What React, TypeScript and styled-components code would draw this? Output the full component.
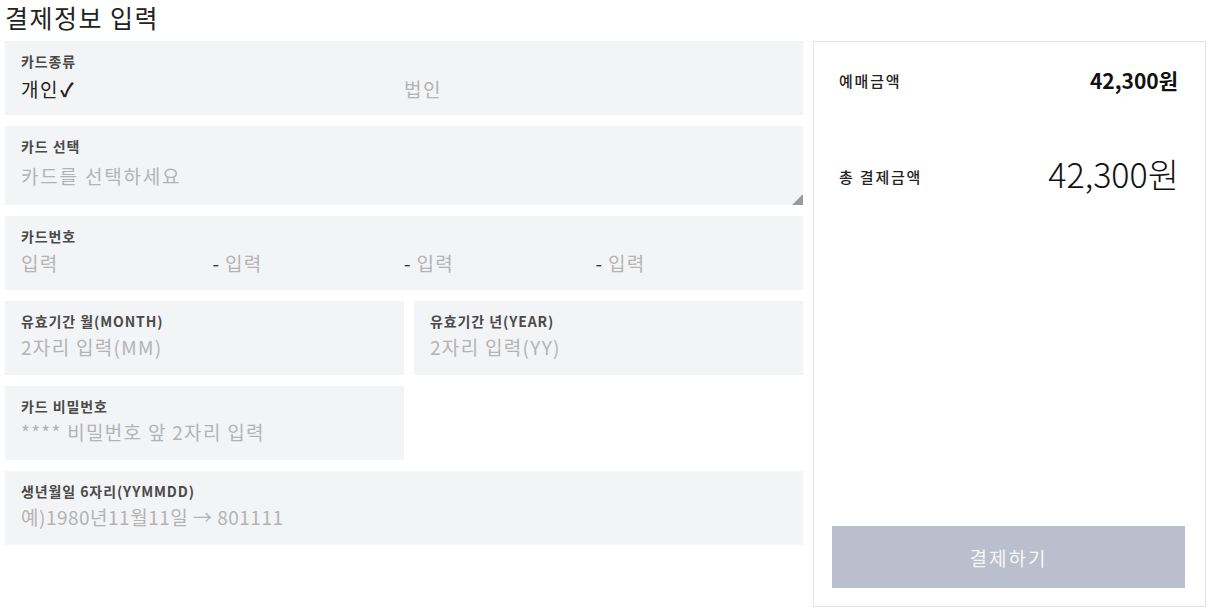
import React from "react";
import styled, { createGlobalStyle } from "styled-components";

const GlobalStyle = createGlobalStyle`
  html, body {
    margin: 0;
    padding: 0;
    background: #fff;
  }
  body {
    font-family: "Noto Sans CJK KR", "Noto Sans", sans-serif;
    color: #222;
  }
  * {
    box-sizing: border-box;
  }
`;

const Page = styled.div`
  width: 1211px;
  padding: 0 5px;
`;

const Title = styled.h1`
  margin: 0 0 7px;
  font-size: 25px;
  line-height: 34px;
  font-weight: 400;
  letter-spacing: 1.5px;
  color: #222;
`;

const Layout = styled.div`
  display: flex;
  align-items: flex-start;
  gap: 10px;
`;

const FormColumn = styled.div`
  width: 798px;
  display: flex;
  flex-direction: column;
  gap: 11px;
`;

const FieldRow = styled.div`
  display: grid;
  grid-template-columns: 399px 1fr;
  gap: 10px;
`;

const Field = styled.div<{ $height?: number; $width?: number; $resizable?: boolean }>`
  position: relative;
  height: ${(p) => p.$height || 74}px;
  width: ${(p) => (p.$width ? `${p.$width}px` : "100%")};
  padding: 10px 16px 12px;
  background-color: #f3f4f5;
  display: flex;
  flex-direction: column;
  gap: 4px;

  ${(p) =>
    p.$resizable &&
    `
    padding-bottom: 0;
    &::after {
      content: "";
      position: absolute;
      right: 0;
      bottom: 0;
      width: 0;
      height: 0;
      border-left: 11px solid transparent;
      border-bottom: 11px solid #9a9a9a;
    }
  `}
`;

const FieldLabel = styled.label`
  font-size: 14px;
  line-height: 20px;
  font-weight: 700;
  letter-spacing: 0.9px;
  color: #4a4a4a;
  white-space: nowrap;
`;

const Columns = styled.div<{ $count: number }>`
  display: grid;
  grid-template-columns: repeat(${(p) => p.$count}, 1fr);
  align-items: center;
  height: 28px;
`;

const TypeOption = styled.button<{ $active?: boolean }>`
  all: unset;
  font-family: inherit;
  font-size: 19px;
  line-height: 28px;
  letter-spacing: 1.5px;
  color: ${(p) => (p.$active ? "#222" : "#b3b3b3")};
  cursor: pointer;
  white-space: nowrap;
`;

const CheckMark = styled.span`
  margin-left: 1px;
  font-weight: 700;
  color: #222;
`;

const TextInput = styled.input<{ $spacing?: number }>`
  border: 0;
  outline: none;
  padding: 0;
  margin: -2px 0 0;
  width: 100%;
  min-width: 0;
  height: 28px;
  background: transparent;
  font-family: inherit;
  font-size: 19px;
  line-height: 28px;
  letter-spacing: ${(p) => p.$spacing ?? 1.3}px;
  color: #222;

  &::placeholder {
    color: #b3b3b3;
  }
`;

const TextArea = styled.textarea`
  flex: 1;
  border: 0;
  outline: none;
  resize: none;
  padding: 2px 0 0;
  margin: 0;
  background: transparent;
  font-family: inherit;
  font-size: 19px;
  line-height: 28px;
  letter-spacing: 1.8px;
  color: #222;

  &::placeholder {
    color: #b3b3b3;
  }
`;

const NumberPart = styled.div`
  display: flex;
  align-items: center;
  gap: 6px;
`;

const Dash = styled.span`
  font-size: 19px;
  line-height: 28px;
  margin-top: -2px;
  color: #333;
`;

const SummaryPanel = styled.aside`
  width: 393px;
  height: 566px;
  border: 1px solid #e3e3e3;
  padding: 19px 20px 18px 18px;
  display: flex;
  flex-direction: column;
`;

const SummaryRow = styled.div<{ $height: number; $gap?: number }>`
  display: flex;
  justify-content: space-between;
  align-items: center;
  height: ${(p) => p.$height}px;
  margin-top: ${(p) => p.$gap || 0}px;
  padding: 0 7px 0 7px;
`;

const SummaryLabel = styled.span`
  font-size: 15px;
  font-weight: 500;
  letter-spacing: 1.8px;
  color: #222;
`;

const SummaryValue = styled.span<{ $large?: boolean }>`
  font-size: ${(p) => (p.$large ? 34 : 21)}px;
  line-height: 1;
  font-weight: ${(p) => (p.$large ? 300 : 700)};
  color: #111;
  margin-top: ${(p) => (p.$large ? -4 : 0)}px;
  margin-right: ${(p) => (p.$large ? -1 : 0)}px;
`;

const PayButton = styled.button`
  all: unset;
  margin-top: auto;
  height: 62px;
  background-color: #b9bfcc;
  color: #f5f6f8;
  font-family: inherit;
  font-size: 19px;
  letter-spacing: 2px;
  text-align: center;
  cursor: pointer;
`;

export default function App() {
  return (
    <Page>
      <GlobalStyle />
      <Title>결제정보 입력</Title>
      <Layout>
        <FormColumn>
          <Field>
            <FieldLabel>카드종류</FieldLabel>
            <Columns $count={2}>
              <TypeOption $active>
                개인<CheckMark>✓</CheckMark>
              </TypeOption>
              <TypeOption>법인</TypeOption>
            </Columns>
          </Field>

          <Field $height={79} $resizable>
            <FieldLabel>카드 선택</FieldLabel>
            <TextArea placeholder="카드를 선택하세요" />
          </Field>

          <Field>
            <FieldLabel>카드번호</FieldLabel>
            <Columns $count={4}>
              <TextInput placeholder="입력" />
              {[1, 2, 3].map((i) => (
                <NumberPart key={i}>
                  <Dash>-</Dash>
                  <TextInput placeholder="입력" />
                </NumberPart>
              ))}
            </Columns>
          </Field>

          <FieldRow>
            <Field>
              <FieldLabel>유효기간 월(MONTH)</FieldLabel>
              <TextInput placeholder="2자리 입력(MM)" />
            </Field>
            <Field>
              <FieldLabel>유효기간 년(YEAR)</FieldLabel>
              <TextInput placeholder="2자리 입력(YY)" />
            </Field>
          </FieldRow>

          <Field $width={399}>
            <FieldLabel>카드 비밀번호</FieldLabel>
            <TextInput placeholder="**** 비밀번호 앞 2자리 입력" />
          </Field>

          <Field>
            <FieldLabel>생년월일 6자리(YYMMDD)</FieldLabel>
            <TextInput $spacing={0.5} placeholder="예)1980년11월11일 → 801111" />
          </Field>
        </FormColumn>

        <SummaryPanel>
          <SummaryRow $height={38}>
            <SummaryLabel>예매금액</SummaryLabel>
            <SummaryValue>42,300원</SummaryValue>
          </SummaryRow>
          <SummaryRow $height={48} $gap={53}>
            <SummaryLabel>총 결제금액</SummaryLabel>
            <SummaryValue $large>42,300원</SummaryValue>
          </SummaryRow>
          <PayButton>결제하기</PayButton>
        </SummaryPanel>
      </Layout>
    </Page>
  );
}
